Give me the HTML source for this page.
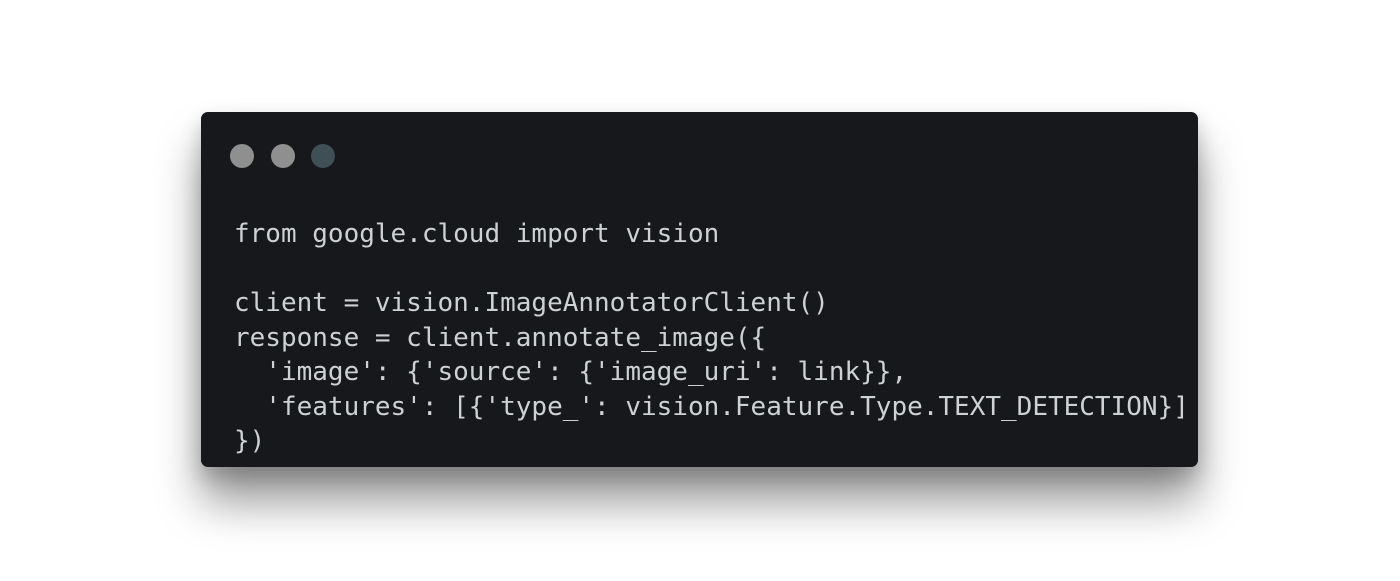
<!DOCTYPE html>
<html><head><style>
body{margin:0;width:1400px;height:581px;background:#fff;overflow:hidden;position:relative}
.win{position:absolute;left:201px;top:112px;width:997px;height:355px;background:#17181b;border-radius:7px;box-shadow:0 35px 45px rgba(0,0,0,0.4),0 10px 20px rgba(0,0,0,0.2)}
.dot{position:absolute;top:144px;width:24px;height:24px;border-radius:50%}
pre{position:absolute;left:234px;top:217px;margin:0;font-family:"DejaVu Sans Mono","Liberation Mono",monospace;font-size:26px;line-height:34.5px;color:#cdd1d4}
</style></head><body>
<div class="win"></div>
<div class="dot" style="left:230px;background:#8f8f8f"></div>
<div class="dot" style="left:271px;background:#8f8f8f"></div>
<div class="dot" style="left:311px;background:#3f4f55"></div>
<pre>from google.cloud import vision

client = vision.ImageAnnotatorClient()
response = client.annotate_image({
  'image': {'source': {'image_uri': link}},
  'features': [{'type_': vision.Feature.Type.TEXT_DETECTION}]
})</pre>
</body></html>
